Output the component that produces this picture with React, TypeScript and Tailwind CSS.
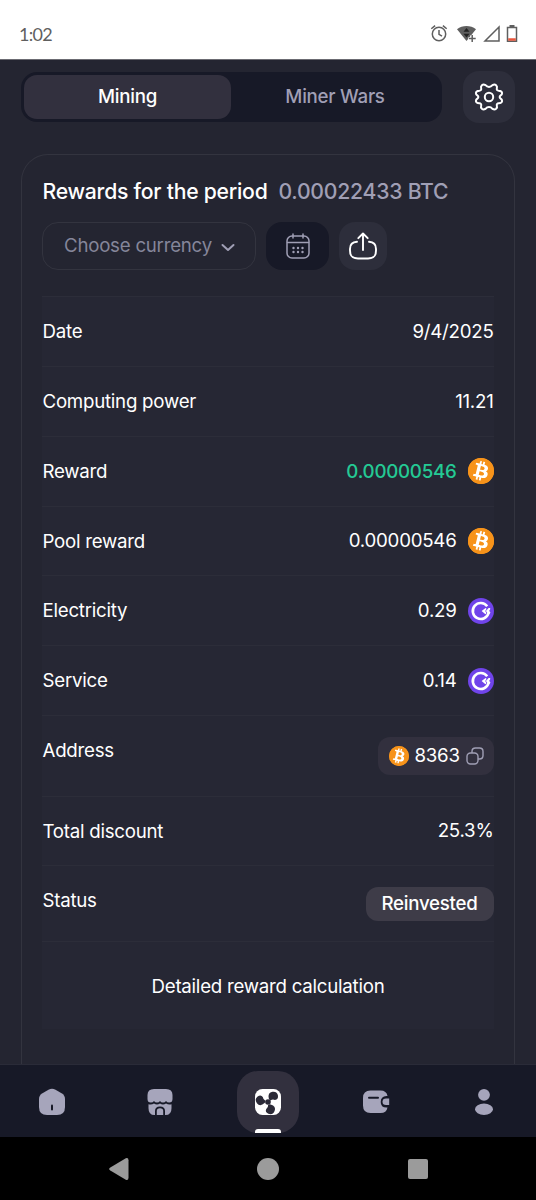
import type { ReactNode } from "react";
import { SiBitcoin } from "react-icons/si";

type Coin = "btc" | "gmt";

type RewardRow = {
  label: string;
  value: string;
  coin?: Coin;
  accent?: boolean;
  className: string;
};

const rows: RewardRow[] = [
  { label: "Date", value: "9/4/2025", className: "h-[70px]" },
  { label: "Computing power", value: "11.21", className: "h-[70px]" },
  { label: "Reward", value: "0.00000546", coin: "btc", accent: true, className: "h-[70px]" },
  { label: "Pool reward", value: "0.00000546", coin: "btc", className: "h-[69px]" },
  { label: "Electricity", value: "0.29", coin: "gmt", className: "h-[70px]" },
  { label: "Service", value: "0.14", coin: "gmt", className: "h-[70px]" },
];

function BtcIcon({ className }: { className: string }) {
  return (
    <span className={`flex shrink-0 items-center justify-center overflow-hidden rounded-full bg-[radial-gradient(circle,#fff_50%,#f7931a_60%)] ${className}`}>
      <SiBitcoin className="size-full scale-[1.22] text-[#f7931a]" />
    </span>
  );
}

function GmtIcon() {
  return (
    <svg viewBox="0 0 26 26" className="mt-px size-[26px] shrink-0">
      <circle cx="13" cy="13" r="13" fill="#7044ea" />
      <path d="M19.2 8.2A8 8 0 1 0 20.6 14.8" fill="none" stroke="#fff" strokeWidth="2.6" />
      <path d="M17.600 10 13.600 13l3.800 3.200c1-.5 1.100-1.200.6-1.900l-.8-1.300.9-1.200c.5-.8.4-1.400-.5-1.800Z" fill="#fff" />
      <path d="M22.200 10h-1.600L17.900 13l2 2.800h1.900l.6-1.600-1.300-1.200 1-1.400Z" fill="#fff" />
    </svg>
  );
}

function StatusBar() {
  return (
    <header className="flex h-[60px] shrink-0 items-center justify-between border-b border-[#6b6b72] bg-white pt-[9px] pr-[18px] pl-[19px]">
      <span className="font-['Lato','Liberation_Sans',sans-serif] text-[18px] tracking-[-0.7px] text-[#5f5f5f]">1:02</span>
      <svg viewBox="0 0 88 20" className="h-5 w-[88px]" fill="none" stroke="#5f5f5f" strokeWidth="1.5">
        <circle cx="9" cy="10" r="6.7" />
        <path d="M9 6v4.300l3 1.800M1.300 4.800l3.800-3.200M16.700 4.800l-3.800-3.200" />
        <path d="M27 5.200c5.500-4.200 13.500-4.200 19 0L36.500 17Z" fill="#5f5f5f" stroke="none" />
        <path d="m36.500 4 3 3.700h-6ZM33.500 9.700h6l-3 3.700Z" fill="#222" stroke="none" />
        <path d="M42 11v8M38 15h8" stroke="#fff" strokeWidth="3" />
        <path d="M42.200 11v7M38.700 14.500h7" />
        <path d="M69 3v14H55Z" />
        <path d="M77.500 3.500h9v13.700h-9z" />
        <path d="M79.500 2h5" strokeWidth="2" />
        <path d="M78.200 15.500h7.600" stroke="#e8563c" strokeWidth="2.500" />
      </svg>
    </header>
  );
}

function TopTabs() {
  return (
    <div className="flex items-center justify-between pt-[11px] pr-[21px] pl-[21px]">
      <div className="flex h-[50px] w-[421px] rounded-[16px] bg-[#171927] p-[3px] text-[18.7px] font-medium">
        <button type="button" className="h-[44px] w-[207px] rounded-[13px] bg-[#32303e] pt-px text-white">
          Mining
        </button>
        <button type="button" className="flex-1 pt-px text-[#a09fb5]">
          Miner Wars
        </button>
      </div>
      <button type="button" aria-label="Settings" className="flex size-[52px] items-center justify-center rounded-[16px] bg-[#2d2e3b]">
        <svg viewBox="0 0 30 30" className="size-[30px]" fill="none" stroke="#fff" strokeWidth="2" strokeLinejoin="round">
          <circle cx="15" cy="15" r="4.200" />
          <path d="M11.500 3.200Q9.500 1.900 7.900 3.200Q6.500 4.500 7.200 6.700Q7.500 8.500 5.300 8.700Q2 8.900 1.900 11Q1.800 12.700 3.500 13.500Q5.200 15 3.500 16.500Q1.800 17.300 1.900 19Q2 21.100 5.300 21.300Q7.500 21.500 7.200 23.300Q6.500 25.500 7.900 26.800Q9.500 28.100 11.500 26.800Q13 25 15 25Q17 25 18.500 26.800Q20.500 28.100 22.100 26.800Q23.500 25.500 22.800 23.300Q22.500 21.500 24.700 21.300Q28 21.100 28.100 19Q28.200 17.300 26.500 16.500Q24.800 15 26.500 13.500Q28.200 12.700 28.100 11Q28 8.900 24.700 8.700Q22.500 8.500 22.800 6.700Q23.500 4.500 22.100 3.200Q20.500 1.900 18.500 3.200Q17 5 15 5Q13 5 11.500 3.200Z" />
        </svg>
      </button>
    </div>
  );
}

function Toolbar() {
  return (
    <div className="mt-[16px] flex gap-[10px]">
      <button type="button" className="flex h-[48px] w-[214px] items-center rounded-[16px] border border-[#33343f] pl-[21px] text-[18.7px] text-[#85869a]">
        <span className="pt-px">Choose currency</span>
        <svg viewBox="0 0 14 10" className="mt-[3px] ml-[9px] h-[10px] w-[14px]" fill="none" stroke="#a09fb5" strokeWidth="2" strokeLinecap="round" strokeLinejoin="round">
          <path d="m1.500 2 5.500 5 5.500-5" />
        </svg>
      </button>
      <button type="button" aria-label="Calendar" className="flex h-[48px] w-[63px] items-center justify-center rounded-[16px] bg-[#171927]">
        <svg viewBox="0 0 24 26" className="h-[26px] w-[24px]" fill="none" stroke="#a09fb5" strokeWidth="1.500" strokeLinecap="round">
          <rect x="1" y="3" width="22" height="22" rx="5" />
          <path d="M1.500 9.500h21M7 1v4M17 1v4" />
          <path d="M7.500 15h.01M12 15h.01M16.500 15h.01M7.500 19h.01M12 19h.01M16.500 19h.01" strokeWidth="2.400" />
        </svg>
      </button>
      <button type="button" aria-label="Share" className="flex size-[48px] items-center justify-center rounded-[16px] bg-[#2d2e3b]">
        <svg viewBox="0 0 28 28" className="size-[28px]" fill="none" stroke="#fff" strokeWidth="1.900" strokeLinecap="round" strokeLinejoin="round">
          <path d="M14 18V1.500M9.300 6.200 14 1.500l4.700 4.700" />
          <path d="M8 9.800C3 10 1 12.500 1 17v1.500c0 6 2.500 8 8 8h10c5.500 0 8-2 8-8V17c0-4.500-2-7-7-7.200" />
        </svg>
      </button>
    </div>
  );
}

function Row({ label, className, children }: { label: string; className: string; children: ReactNode }) {
  return (
    <div className={`flex justify-between border-t border-[#2c2d39] pr-[0.5px] pl-[0.5px] ${className}`}>
      <span className="pt-[20.5px] leading-[28px]">{label}</span>
      {children}
    </div>
  );
}

function RewardsCard() {
  return (
    <section className="mx-[21px] mt-[31px] flex-1 rounded-t-[27px] border border-b-0 border-[#33343f] px-[20px] pt-[22px]">
      <h1 className="flex gap-[11px] pl-[0.5px] text-[21.200px] leading-[29px] font-medium">
        Rewards for the period
        <span className="text-[#a09fb5]">0.00022433 BTC</span>
      </h1>
      <Toolbar />
      <div className="mt-[26px] w-[452px] bg-[#262734] text-[18.700px]">
        {rows.map((row) => (
          <Row key={row.label} label={row.label} className={row.className}>
            <span className={`flex items-center gap-[11px] pb-px ${row.accent ? "font-medium text-[#24ca94]" : ""}`}>
              <span className="pt-[2px]">{row.value}</span>
              {row.coin === "btc" && <BtcIcon className="size-[26px]" />}
              {row.coin === "gmt" && <GmtIcon />}
            </span>
          </Row>
        ))}
        <Row label="Address" className="h-[81px] items-start">
          <span className="mt-[21px] flex h-[38px] w-[116px] items-center rounded-[12px] bg-[#32303e] pl-[11px]">
            <BtcIcon className="size-[20px]" />
            <span className="ml-[6px]">8363</span>
            <svg viewBox="0 0 18 18" className="ml-[6px] size-[18px]" fill="none" stroke="#a09fb5" strokeWidth="1.400">
              <rect x="1" y="6" width="11" height="11" rx="3.500" />
              <path d="M6 6V4.500C6 2 7 1 9.500 1h4C16 1 17 2 17 4.500v4c0 2.500-1 3.500-3.500 3.500H12" />
            </svg>
          </span>
        </Row>
        <Row label="Total discount" className="h-[69px]">
          <span className="flex items-center pt-px">25.3%</span>
        </Row>
        <Row label="Status" className="h-[76px] items-start">
          <span className="mt-[21px] flex h-[34px] w-[128px] items-center justify-center rounded-[12px] bg-[#3e3c48] font-medium">
            Reinvested
          </span>
        </Row>
        <button type="button" className="block h-[88px] w-full border-t border-[#2c2d39] pt-[3px]">
          Detailed reward calculation
        </button>
      </div>
    </section>
  );
}

function NavItem({ label, active, children }: { label: string; active?: boolean; children: ReactNode }) {
  return (
    <button
      type="button"
      aria-label={label}
      className={`relative flex size-[62px] items-center justify-center rounded-[21px] ${active ? "bg-[#32303e]" : ""}`}
    >
      <svg viewBox="0 0 28 28" className="size-[28px]" fill="currentColor">
        {children}
      </svg>
      {active && <span className="absolute bottom-0 left-[18px] h-[4px] w-[26px] rounded-t-[3px] bg-white" />}
    </button>
  );
}

// single fan blade, rotated around the hub
const blade = "M14.800 10.500Q13.500 4.500 18.500 3.800q4.800-.5 5.500 4 .3 4-3 4.200-2.500-1-4.500.4-1.300-.5-1.700-1.900Z";

function NavBar() {
  return (
    <nav className="flex h-[73px] shrink-0 items-center justify-between border-t border-[#2a2b38] bg-[#171927] px-[21px] pt-[2px] text-[#a6a5bb]">
      <NavItem label="Home">
        <path d="M10.500 1.700Q14 0 17.500 1.700L24 5.500Q27 7.500 27 11v8q0 8-8 8H9q-8 0-8-8v-8Q1 7.500 4 5.500Z" />
        <path d="M14 17.500v4" stroke="#171927" strokeWidth="2" strokeLinecap="round" />
      </NavItem>
      <NavItem label="Market">
        <path d="M8 1h12q6.500 0 6.500 6v4q0 3.500-3.300 3.500-2.200 0-3.200-1.500-1 1.500-3 1.500T14 13q-1 1.500-3 1.500T8 13q-1 1.500-3.200 1.500-3.300 0-3.300-3.500V7q0-6 6.500-6Z" />
        <path d="M2.500 16.200q3.300.700 5.500-.8 3 2 6 0 3 2 6 0 2.200 1.500 5.500.8v4q0 6.800-6 6.800H19v-4q0-4.500-5-4.500T9 23v4h-.5q-6 0-6-6.800Z" />
        <path d="M10.800 27v-4q0-2.800 3.200-2.800t3.200 2.800v4Z" />
      </NavItem>
      <NavItem label="Mining" active>
        <rect x="1" y="1" width="26" height="26" rx="7.500" fill="#fff" />
        <g fill="#2b2a37">
          <circle cx="14" cy="14" r="2.800" />
          <path d={blade} />
          <path d={blade} transform="rotate(120 14 14)" />
          <path d={blade} transform="rotate(240 14 14)" />
        </g>
      </NavItem>
      <NavItem label="Wallet">
        <path d="M8.500 2.500h10q6 0 7 5.500h-1q-5.800.500-5.800 6t5.800 5.500h1q-1 5.500-7 5.500h-10q-7.500 0-7.500-7.500V10q0-7.500 7.500-7.500Z" />
        <path d="M24 10.500h3.200v6.500H24q-3.500 0-3.500-3.200t3.500-3.300Z" />
        <path d="M7 9.800h9" stroke="#171927" strokeWidth="2" strokeLinecap="round" />
      </NavItem>
      <NavItem label="Profile">
        <circle cx="14" cy="6.800" r="5.900" />
        <ellipse cx="14" cy="21.200" rx="9" ry="5.700" />
      </NavItem>
    </nav>
  );
}

function SystemBar() {
  return (
    <footer className="flex h-[63px] shrink-0 items-center justify-between bg-black px-[107px] text-[#9b9b9b]">
      <svg viewBox="-1 0 22 22" className="size-[22px]" fill="currentColor">
        <path d="M2.300 9.500 17.800.3Q20.500-.500 20.500 2.300v17.400q0 2.800-2.700 2L2.300 12.500q-2.300-1.500 0-3Z" />
      </svg>
      <span className="size-[22px] rounded-full bg-current" />
      <span className="m-px size-[20px] rounded-[2px] bg-current" />
    </footer>
  );
}

export default function App() {
  return (
    <div className="flex h-[1200px] w-[536px] flex-col overflow-hidden bg-[#242531] font-['Inter','Liberation_Sans',sans-serif] tracking-[-0.25px] text-white">
      <StatusBar />
      <main className="flex min-h-0 flex-1 flex-col overflow-hidden">
        <TopTabs />
        <RewardsCard />
      </main>
      <NavBar />
      <SystemBar />
    </div>
  );
}
